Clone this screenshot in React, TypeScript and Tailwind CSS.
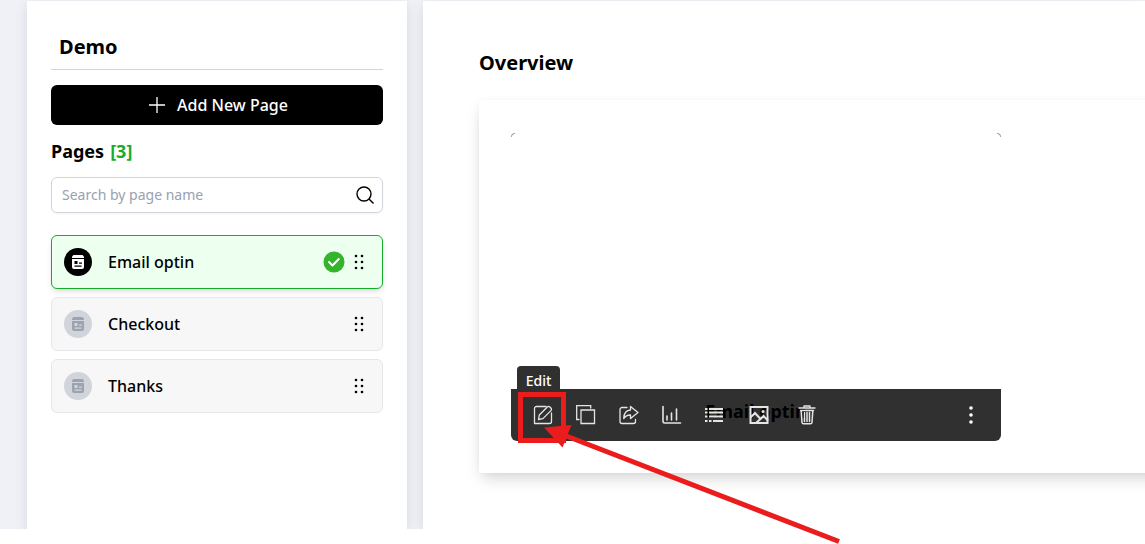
import type { ReactNode } from 'react';

const pages = [
  { name: 'Email optin', active: true },
  { name: 'Checkout', active: false },
  { name: 'Thanks', active: false },
];

function PageIcon({ active }: { active: boolean }) {
  const hole = active ? '#000000' : '#d1d5db';
  return (
    <svg viewBox="0 0 28 28" className={active ? 'size-7 text-white' : 'size-7 text-[#9ca3af]'} aria-hidden="true">
      <circle cx="14" cy="14" r="14" fill={hole} />
      <path d="M9.500 7h9l1.500 1.500V10H8V8.500z" fill="currentColor" />
      <path d="M8 11h12v8a2 2 0 0 1-2 2h-8a2 2 0 0 1-2-2z" fill="currentColor" />
      <path d="M10.500 13h3v3h-3zM15 14.500h3v1.300h-3zM10.500 17.500h7v1.200h-7z" fill={hole} />
    </svg>
  );
}

function DragDots() {
  return (
    <svg viewBox="0 0 12 16" className="h-4 w-3" fill="currentColor" aria-hidden="true">
      {[2, 8, 14].map((y) => (
        <g key={y}>
          <circle cx="3" cy={y} r="1.300" />
          <circle cx="9" cy={y} r="1.300" />
        </g>
      ))}
    </svg>
  );
}

function ToolIcon({ children }: { children: ReactNode }) {
  return (
    <svg
      viewBox="0 0 20 20"
      className="size-5 shrink-0"
      fill="none"
      stroke="currentColor"
      strokeWidth="1.3"
      strokeLinecap="round"
      strokeLinejoin="round"
      aria-hidden="true"
    >
      {children}
    </svg>
  );
}

const tools = [
  {
    label: 'Edit',
    box: 'w-5',
    art: (
      <>
        <path d="M13 1.500H3.500a2 2 0 0 0-2 2v15h15a2 2 0 0 0 2-2V8" />
        <path d="M5.500 14.500l.8-4.500 8-8a1.800 1.800 0 0 1 2.600 0l1 1a1.800 1.800 0 0 1 0 2.600l-8 8z" />
      </>
    ),
  },
  {
    label: 'Duplicate',
    box: 'w-5',
    art: (
      <g strokeLinejoin="miter">
        <path d="M5 5h13.500v13.500H5z" />
        <path d="M3 14.500H.7V.7h14V3" />
      </g>
    ),
  },
  {
    label: 'Share',
    box: 'w-5',
    art: (
      <>
        <path d="M8 2.500H3a2 2 0 0 0-2 2v12a2 2 0 0 0 2 2h11.500a2 2 0 0 0 2-2V14.500" />
        <path d="M11.500 1.500l7.500 6-7.500 6V10c-3.500-.1-5 1-6.800 3.500C5 8.500 7.500 5.200 11.500 5z" />
      </>
    ),
  },
  {
    label: 'Statistics',
    box: 'w-5',
    art: <path d="M1 1.500v15a1.500 1.500 0 0 0 1.500 1.500h16M5 11v4M9.500 8v7M14.500 4v11" strokeWidth="1.600" />,
  },
  {
    label: 'Details',
    box: 'w-5',
    art: (
      <path
        d="M0 4h2.500M4 4h14M0 7.500h2.500M4 7.500h14M0 11.500h2.500M4 11.500h14M0 16h2.500M4 16h2.500M8 16h10"
        strokeWidth="1.800"
        strokeLinecap="butt"
      />
    ),
  },
  {
    label: 'Image',
    box: 'w-[22px]',
    art: (
      <g strokeLinejoin="miter" strokeWidth="2">
        <path d="M1.500 2h17v16h-17z" />
        <path d="M2 12l4-4 5.500 6 3-3 4 4M8 17l3.500-3" />
        <circle cx="14" cy="6.500" r="1.500" fill="currentColor" stroke="none" />
      </g>
    ),
  },
  {
    label: 'Delete',
    box: 'w-7',
    art: (
      <>
        <path d="M2 3h16M7 2.500V1h6v1.500" />
        <path d="M3.500 5.500h13M4.200 6l.8 11.500a1.500 1.500 0 0 0 1.500 1.300h7a1.500 1.500 0 0 0 1.500-1.300l.8-11.500M7.500 7.500v9M10 7.500v9M12.500 7.500v9" strokeWidth="1.500" />
      </>
    ),
  },
];

function Sidebar() {
  return (
    <aside className="w-[380px] shrink-0 bg-white px-6 pt-6 shadow-[0_4px_12px_rgba(0,0,0,0.1)]">
      <h1 className="border-b border-gray-300 px-2 pt-2 pb-2 text-xl leading-7 font-bold">Demo</h1>
      <button
        type="button"
        className="mt-[15px] flex h-10 w-full items-center justify-center gap-3 rounded-md bg-black pl-[3px] text-base font-medium text-white"
      >
        <svg viewBox="0 0 16 16" className="size-4" stroke="currentColor" strokeWidth="1.300" aria-hidden="true">
          <path d="M8 0v16M0 8h16" />
        </svg>
        Add New Page
      </button>
      <h2 className="mt-3 flex gap-1.5 text-lg leading-7 font-bold">
        Pages <span className="text-[#16ad2b]">[3]</span>
      </h2>
      <div className="mt-3 flex h-9 items-center rounded-md border border-gray-300 pr-[7px] pl-[10px] shadow-xs">
        <input
          type="text"
          aria-label="Search by page name"
          placeholder="Search by page name"
          className="min-w-0 flex-1 bg-transparent text-sm outline-none placeholder:text-gray-400"
        />
        <button type="button" aria-label="Search">
          <svg viewBox="0 0 20 20" className="size-5" fill="none" stroke="currentColor" strokeWidth="1.400" aria-hidden="true">
            <circle cx="9" cy="9" r="7" />
            <path d="M14 14l4.500 4.500" />
          </svg>
        </button>
      </div>
      <ul className="mt-[22px] flex flex-col gap-2">
        {pages.map(({ name, active }) => (
          <li
            key={name}
            className={
              active
                ? 'flex h-[54px] items-center rounded-md border border-[#16ad2b] bg-[#edffee] pr-[17px] pl-3 shadow-md'
                : 'flex h-[54px] items-center rounded-md border border-gray-200 bg-[#f7f7f7] pr-[17px] pl-3'
            }
          >
            <PageIcon active={active} />
            <a href="#" className="ml-4 flex-1 text-base font-medium">
              {name}
            </a>
            {active && (
              <svg viewBox="0 0 22 22" className="mr-2 size-[22px]" aria-hidden="true">
                <circle cx="11" cy="11" r="10.500" fill="#34b42b" />
                <path d="M6 11l3.500 3.500L15.800 8" fill="none" stroke="white" strokeWidth="2" strokeLinecap="round" strokeLinejoin="round" />
              </svg>
            )}
            <button type="button" aria-label={'Reorder ' + name}>
              <DragDots />
            </button>
          </li>
        ))}
      </ul>
    </aside>
  );
}

function Preview() {
  return (
    <div className="relative w-[490px]">
      <div className="flex h-[257px] justify-between pt-px">
        <span className="size-1 rounded-tl-md border-t border-l border-neutral-400" />
        <span className="size-1 rounded-tr-md border-t border-r border-neutral-400" />
      </div>
      <h3 className="flex h-[52px] justify-center pt-2 text-lg leading-7 font-bold">Email optin</h3>
      <div className="absolute inset-x-0 bottom-0 flex h-[52px] items-center rounded-b-md bg-black/81 pr-5 pl-[22px] text-neutral-200">
        <div className="flex gap-[23px]">
          {tools.map(({ label, box, art }) => (
            <button key={label} type="button" aria-label={label} className={'flex justify-center ' + box}>
              <ToolIcon>{art}</ToolIcon>
            </button>
          ))}
        </div>
        <button type="button" aria-label="More" className="ml-auto text-white">
          <svg viewBox="0 0 20 20" className="size-5" fill="currentColor" aria-hidden="true">
            <circle cx="10" cy="3" r="1.800" />
            <circle cx="10" cy="10" r="1.800" />
            <circle cx="10" cy="17" r="1.800" />
          </svg>
        </button>
      </div>
      <div
        role="tooltip"
        className="absolute bottom-[52px] left-[6px] flex h-[23px] w-[43px] items-center justify-center rounded-t-sm bg-[#303030] pt-1.5 text-sm font-medium text-white"
      >
        Edit
      </div>
    </div>
  );
}

function Callout() {
  return (
    <svg
      viewBox="0 0 340 155"
      className="pointer-events-none absolute top-[389px] left-[511px] h-[155px] w-[340px]"
      fill="none"
      stroke="#ea1c1c"
      strokeWidth="5"
      aria-hidden="true"
    >
      <rect x="9.500" y="5.500" width="43" height="46" />
      <path d="M54 46.500L328 152.500" />
      <path d="M33 38.500L60.500 36L51.500 58.500z" fill="#ea1c1c" stroke="none" />
    </svg>
  );
}

export default function App() {
  return (
    <div className="relative min-h-screen bg-white font-['Noto_Sans','Open_Sans',sans-serif] text-black">
      <div className="flex gap-4 overflow-hidden bg-[#f0f1f7] pt-px pl-[27px]">
        <Sidebar />
        <main className="min-w-0 flex-1 bg-white pt-12 pb-14 pl-14 shadow-[0_4px_12px_rgba(0,0,0,0.1)]">
          <h2 className="text-xl leading-7 font-bold">Overview</h2>
          <section className="-mr-6 mt-[23px] p-8 shadow-[0_8px_15px_-3px_rgba(0,0,0,0.17),0_0_6px_rgba(0,0,0,0.03)]">
            <Preview />
          </section>
        </main>
      </div>
      <Callout />
    </div>
  );
}
